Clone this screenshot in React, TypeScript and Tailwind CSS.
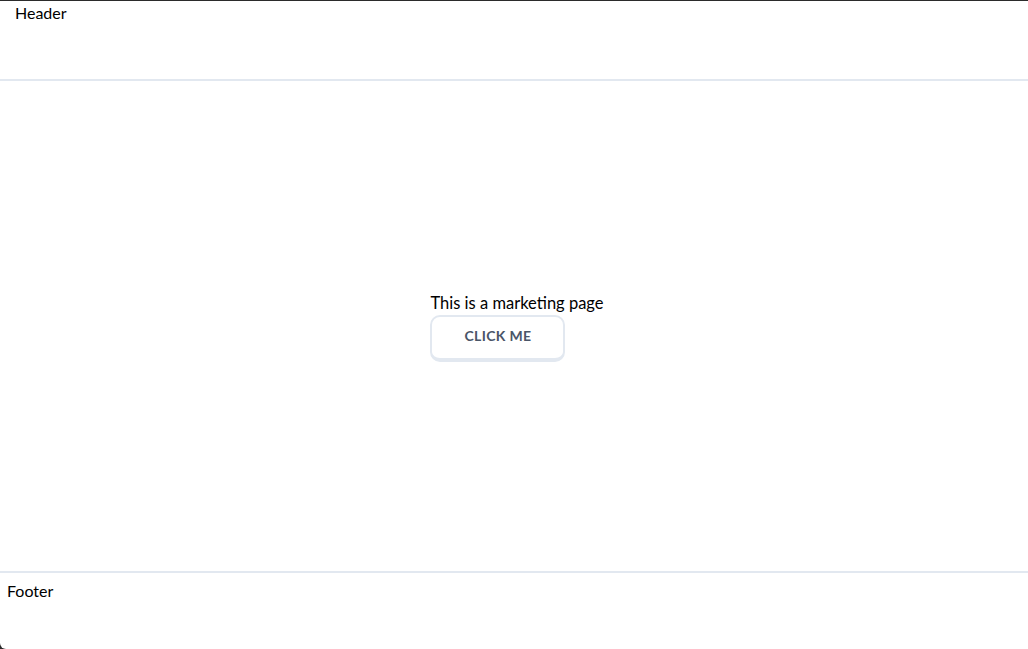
import React from 'react';

const App: React.FC = () => {
  return (
    <div className="h-screen bg-[#2b2b2b] pt-px">
      <div
        className="flex h-full flex-col bg-white rounded-bl-[6px] text-black"
        style={{ fontFamily: 'Lato, "Open Sans", sans-serif' }}
      >
        <header className="h-[80px] shrink-0 border-b-2 border-[#e2e8f0] pl-[15px]">
          <span className="text-base leading-6">Header</span>
        </header>

        <main className="flex flex-1 items-center justify-center">
          <div className="ml-[6px] flex flex-col items-start">
            <p className="text-[16.5px] leading-6">This is a marketing page</p>
            <button className="h-[47px] w-[135px] rounded-[10px] border-2 border-b-4 border-[#e2e8f0] bg-white pb-[2px] text-sm font-bold tracking-wide text-[#4a5568]">
              CLICK ME
            </button>
          </div>
        </main>

        <footer className="h-[78px] shrink-0 border-t-2 border-[#e2e8f0] pl-[7px] pt-[6px]">
          <span className="text-base leading-6">Footer</span>
        </footer>
      </div>
    </div>
  );
};

export default App;
